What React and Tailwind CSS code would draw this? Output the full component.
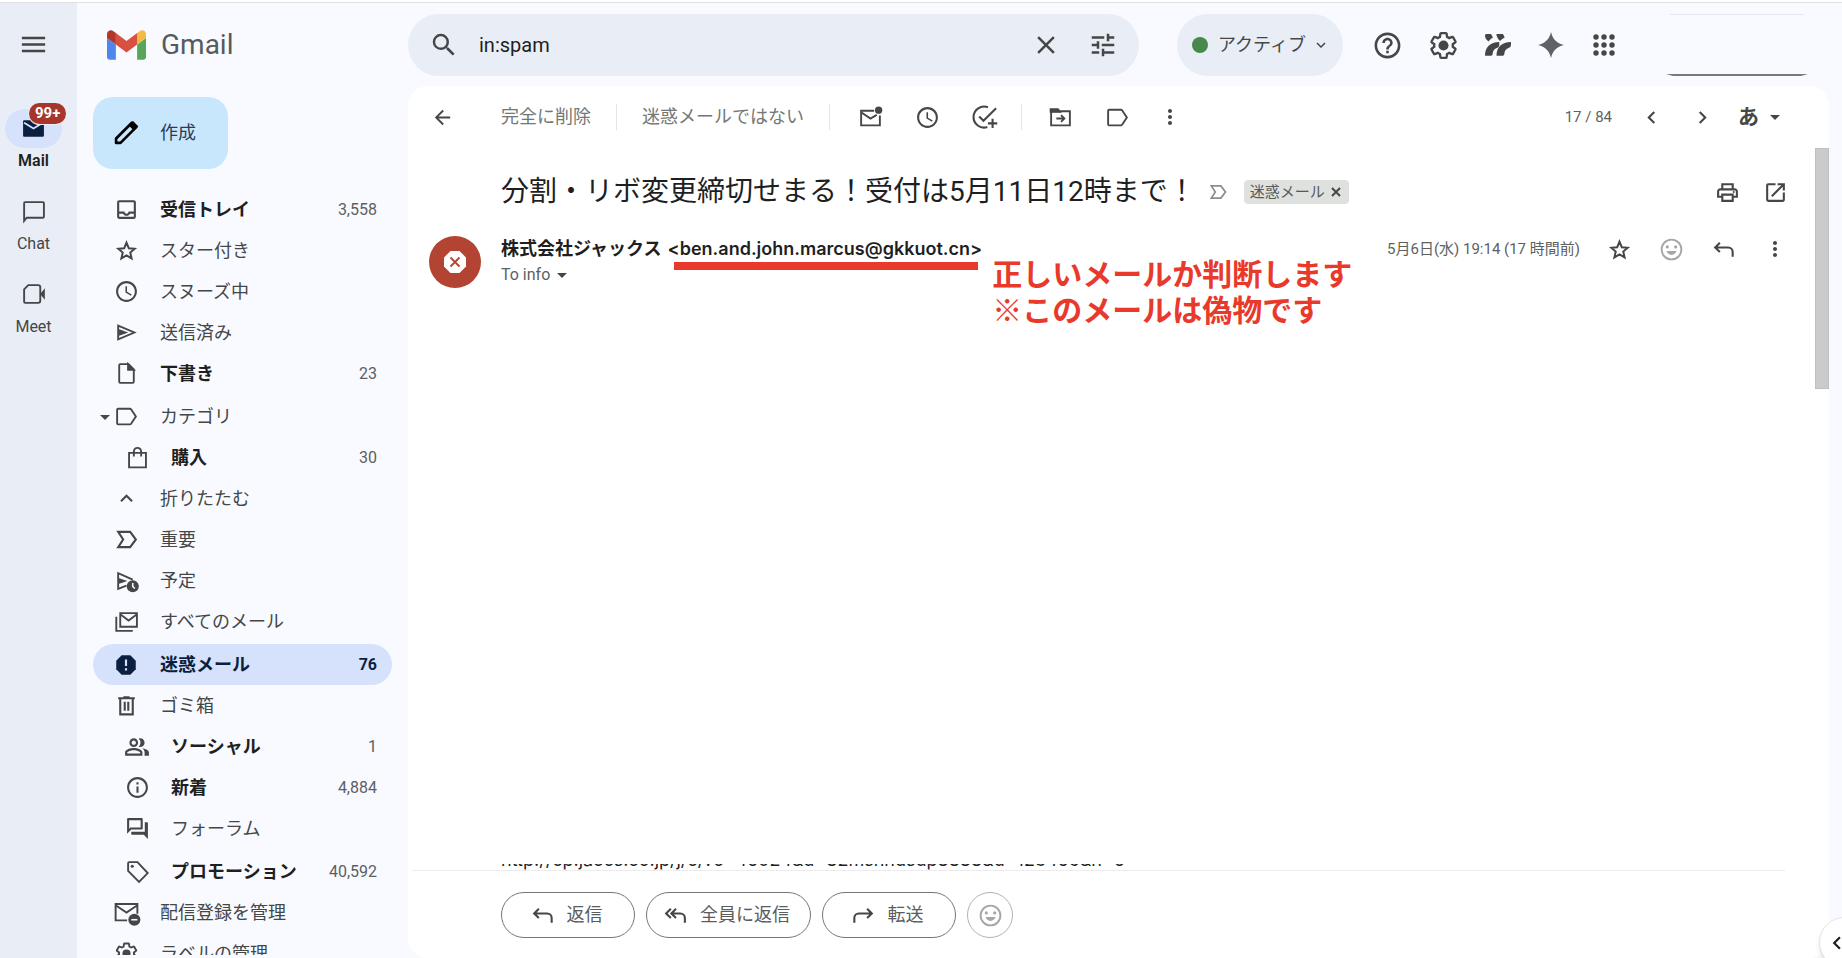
import React, { useState } from 'react';
import {
    MdMenu, MdSearch, MdClose, MdTune, MdHelpOutline, MdOutlineInbox, MdSchedule,
    MdInfoOutline, MdOutlineForum, MdOutlinePeopleAlt, MdMoreVert, MdArrowBack, MdChevronLeft,
    MdChevronRight, MdOutlinePrint, MdOpenInNew, MdArrowDropDown, MdExpandLess, MdExpandMore,
} from 'react-icons/md';

const Svg = ({ size = 25, children }) => (
    <svg width={size} height={size} viewBox="0 0 24 24" fill="none" stroke="currentColor" strokeWidth="1.8" aria-hidden="true">
        {children}
    </svg>
);

const StarIcon = () => (
    <Svg><path d="m12 4.500 2.200 5.300 5.700.5-4.300 3.700 1.300 5.600-4.900-3-4.900 3L8.400 14l-4.300-3.700 5.700-.5z" strokeWidth="1.900" /></Svg>
);
const SendIcon = () => (
    <Svg><path d="M4 5.500 19.500 12 4 18.500zM4 12h7M4 9.500l7 2.500-7 2.500" /></Svg>
);
const DraftIcon = () => (
    <Svg>
        <path d="M6 3h8l5 5v12a1 1 0 0 1-1 1H6a1 1 0 0 1-1-1V4a1 1 0 0 1 1-1z" />
        <path d="M13.500 3v5.500H19z" fill="currentColor" />
    </Svg>
);
const LabelIcon = () => (
    <Svg><path d="M4 4.500h11.200c.5 0 .9.2 1.200.6L21 12l-4.600 6.900c-.3.4-.7.6-1.200.6H4a1 1 0 0 1-1-1v-13a1 1 0 0 1 1-1z" /></Svg>
);
const BagIcon = () => (
    <Svg><path d="M3.900 7.500h16.200v14H3.900zM8.500 11V6.500a3.500 3.800 0 0 1 7 0V11" /></Svg>
);
const ImportantIcon = ({ size }) => (
    <Svg size={size}><path d="M4 4.700h11.500L21 12l-5.500 7.300H4L8.800 12z" strokeWidth="2" /></Svg>
);
const ScheduledIcon = () => (
    <Svg>
        <path d="M12 17 4 20V5l14 6.200M4 12.500h6M4 10.500l6 2-6 2" />
        <circle cx="18" cy="17.500" r="5.800" fill="currentColor" stroke="none" />
        <path d="M18 14.500v3.200l2 2" stroke="#f8faff" strokeWidth="1.500" />
    </Svg>
);
const AllMailIcon = () => (
    <Svg>
        <path d="M6 4h16v13H6zM6 5l8 6 8-6M2.200 7.500V21H18" />
    </Svg>
);
const SpamIcon = () => (
    <Svg size={26}>
        <path d="M8 3h8l5 5v8l-5 5H8l-5-5V8z" fill="currentColor" stroke="none" />
        <path d="M12 7v6M12 15v2" stroke="#d6e2fb" strokeWidth="2" />
    </Svg>
);
const TrashIcon = () => (
    <Svg><path d="M4 5h16M9 4h6M6 5v15.500h12V5M10.300 8.500v8.500M13.700 8.500v8.500" strokeWidth="2" /></Svg>
);
const PromoIcon = () => (
    <Svg>
        <path d="M3 4v7.500L13.500 22 21.800 13.500 12 3H4a1 1 0 0 0-1 1z" />
        <circle cx="7" cy="7" r="1.500" fill="currentColor" stroke="none" />
    </Svg>
);
const UnsubscribeIcon = () => (
    <Svg size={29}>
        <path d="M12.500 18.500H3V5h18v8M3 6l9 6 9-6" strokeWidth="1.600" />
        <circle cx="18.500" cy="18" r="5" fill="currentColor" stroke="none" />
        <path d="M16 18h5" stroke="#f8faff" strokeWidth="1.300" />
    </Svg>
);
const GearIcon = ({ size = 25 }) => (
    <Svg size={size}>
        <path d="M19.140 12.940c.04-.3.06-.61.06-.94 0-.32-.02-.64-.07-.94l2.030-1.580c.18-.14.23-.41.12-.61l-1.920-3.320c-.12-.22-.37-.29-.59-.22l-2.390.96c-.5-.38-1.030-.7-1.620-.94l-.36-2.540c-.04-.24-.24-.41-.48-.41h-3.840c-.24 0-.43.17-.47.41l-.36 2.540c-.59.24-1.130.57-1.620.94l-2.390-.96c-.22-.08-.47 0-.59.22L2.740 8.870c-.12.21-.08.47.12.61l2.030 1.580c-.05.3-.09.63-.09.94s.02.64.07.94l-2.030 1.580c-.18.14-.23.41-.12.61l1.920 3.320c.12.22.37.29.59.22l2.390-.96c.5.38 1.030.7 1.620.94l.36 2.540c.05.24.24.41.48.41h3.840c.24 0 .44-.17.47-.41l.36-2.540c.59-.24 1.130-.56 1.620-.94l2.390.96c.22.08.47 0 .59-.22l1.920-3.320c.12-.22.07-.47-.12-.61l-2.010-1.580z" />
        <circle cx="12" cy="12" r="3.900" fill="currentColor" stroke="none" />
    </Svg>
);
const UnreadIcon = () => (
    <Svg>
        <path d="M15.500 5.500H3v14h18V10M3 7l9 6 6-3.500" />
        <circle cx="19.800" cy="5" r="3.500" fill="currentColor" stroke="none" />
    </Svg>
);
const TaskIcon = () => (
    <Svg size={28}>
        <path d="M14.500 3.700A9 9 0 1 0 14 20.600M7 11.500l3.700 3.700L21.500 4.500M18.500 13.500v8M14.500 17.500h8" />
    </Svg>
);
const MoveIcon = () => (
    <Svg>
        <path d="M3 6h18v13.500H3zM8 13h7M12.500 9.800l3.200 3.200-3.200 3.200" />
        <path d="M2.500 4h7l2 2.500h-9z" fill="currentColor" />
    </Svg>
);
const ReplyIcon = ({ flip }) => (
    <svg width="25" height="25" viewBox="0 0 24 24" fill="none" stroke="currentColor" strokeWidth="2" aria-hidden="true" className={flip ? '-scale-x-100' : ''}>
        <path d="M8.500 5.500 4 10l4.500 4.500M4 10h12.500c2.300 0 4.300 1.800 4.300 4.300V19" />
    </svg>
);
const ReplyAllIcon = () => (
    <Svg><path d="M7.500 5.500 3 10l4.500 4.500M12.500 5.500 8 10l4.500 4.500M8 10h8.700c2.300 0 4.300 1.800 4.300 4.300V19" strokeWidth="2" /></Svg>
);
const SmileIcon = () => (
    <Svg>
        <circle cx="12" cy="12" r="9.500" />
        <circle cx="8" cy="9.500" r="1.500" fill="currentColor" stroke="none" />
        <circle cx="16" cy="9.500" r="1.500" fill="currentColor" stroke="none" />
        <path d="M7.200 13.500h9.600c-.7 2.300-2.500 3.700-4.800 3.700s-4.100-1.400-4.800-3.700z" fill="currentColor" stroke="none" />
    </Svg>
);

const GmailLogo = () => (
    <svg width="39" height="30" viewBox="52 42 88 66" aria-hidden="true">
        <path fill="#4f86ee" d="M58 108h14V74L52 59v43c0 3.320 2.690 6 6 6" />
        <path fill="#58a55c" d="M120 108h14c3.320 0 6-2.690 6-6V59l-20 15" />
        <path fill="#f2bb42" d="M120 48v26l20-15v-8c0-7.420-8.470-11.650-14.400-7.200" />
        <path fill="#d85140" d="M72 74V48l24 18 24-18v26L96 92" />
        <path fill="#b3362b" d="M52 51v8l20 15V48l-5.600-4.200c-5.940-4.450-14.400-.22-14.400 7.200" />
    </svg>
);

const folderGroups = [
    [
        { name: '受信トレイ', icon: <MdOutlineInbox size={25} />, count: '3,558', bold: true },
        { name: 'スター付き', icon: <StarIcon /> },
        { name: 'スヌーズ中', icon: <MdSchedule size={25} /> },
        { name: '送信済み', icon: <SendIcon /> },
        { name: '下書き', icon: <DraftIcon />, count: '23', bold: true },
    ],
    [
        { name: 'カテゴリ', icon: <LabelIcon />, caret: true },
        { name: '購入', icon: <BagIcon />, count: '30', bold: true, nested: true },
        { name: '折りたたむ', icon: <MdExpandLess size={25} /> },
        { name: '重要', icon: <ImportantIcon /> },
        { name: '予定', icon: <ScheduledIcon /> },
        { name: 'すべてのメール', icon: <AllMailIcon /> },
    ],
    [
        { name: '迷惑メール', icon: <SpamIcon />, count: '76', bold: true, active: true },
        { name: 'ゴミ箱', icon: <TrashIcon /> },
        { name: 'ソーシャル', icon: <MdOutlinePeopleAlt size={26} />, count: '1', bold: true, nested: true },
        { name: '新着', icon: <MdInfoOutline size={25} />, count: '4,884', bold: true, nested: true },
        { name: 'フォーラム', icon: <MdOutlineForum size={25} />, nested: true },
    ],
    [
        { name: 'プロモーション', icon: <PromoIcon />, count: '40,592', bold: true, nested: true },
        { name: '配信登録を管理', icon: <UnsubscribeIcon /> },
        { name: 'ラベルの管理', icon: <GearIcon /> },
    ],
];

const Folder = ({ folder }) => (
    <a
        href="#"
        className={`relative flex h-[41px] items-center rounded-full pr-[15px] ${folder.nested ? 'pl-7' : 'pl-[17px]'} ${folder.active ? 'bg-[#d6e2fb] text-[#0b1f41]' : ''}`}
    >
        {folder.caret && <MdArrowDropDown size={24} className="absolute left-0" />}
        <span className="flex w-8 shrink-0 justify-center">{folder.icon}</span>
        <span className={`ml-[18px] text-lg leading-6 ${folder.bold ? 'font-bold' : ''} ${folder.bold && !folder.active ? 'text-[#1f1f1f]' : ''}`}>
            {folder.name}
        </span>
        {folder.count && (
            <span className={`ml-auto text-base ${folder.active ? 'font-bold' : 'text-[#5e5f61]'}`}>{folder.count}</span>
        )}
    </a>
);

const RailItem = ({ label, active, badge, children }) => (
    <a href="#" className="flex h-[83px] w-full flex-col items-center">
        <span className={`relative mr-2.5 flex h-[39px] w-[57px] items-center justify-center rounded-full ${active ? 'bg-[#d6e2fb] text-[#0b1f41]' : ''}`}>
            {children}
            {badge && (
                <span className="absolute -top-[6px] left-[24px] rounded-full bg-[#a6352b] px-1.5 text-[15px] leading-[21px] font-bold text-white ring-1 ring-[#e9edf6]">
                    {badge}
                </span>
            )}
        </span>
        <span className={`mr-2.5 text-base leading-[26px] ${active ? 'font-semibold text-[#1f1f1f]' : ''}`}>{label}</span>
    </a>
);

const IconButton = ({ label, width = 'w-[57px]', children }) => (
    <button type="button" aria-label={label} className={`flex h-10 shrink-0 items-center justify-center ${width}`}>
        {children}
    </button>
);

const ReplyButton = ({ icon, width, children }) => (
    <button type="button" className={`flex h-[46px] items-center justify-center gap-3 rounded-full border border-[#747775] pr-1 text-lg text-[#5a5c5e] ${width}`}>
        <span className="text-[#444746]">{icon}</span>
        {children}
    </button>
);

const Header = () => {
    const [query, setQuery] = useState('in:spam');

    return (
        <header className="flex h-[83px] shrink-0 items-start pt-[11px]">
            <div className="flex h-[62px] w-[331px] shrink-0 items-center gap-[15px] pl-[30px]">
                <GmailLogo />
                <span className="text-[28px] text-[#575a5c]">Gmail</span>
            </div>
            <form className="flex h-[62px] min-w-0 flex-1 items-center rounded-full bg-[#e9edf6] pl-[21px]" onSubmit={(e) => e.preventDefault()}>
                <button type="submit" aria-label="検索"><MdSearch size={30} /></button>
                <input
                    aria-label="メールを検索"
                    className="ml-5 min-w-0 flex-1 bg-transparent text-xl text-[#1f1f1f] outline-none"
                    value={query}
                    onChange={(e) => setQuery(e.target.value)}
                />
                <button type="button" aria-label="検索をクリア" className="w-[57px]" onClick={() => setQuery('')}>
                    <MdClose size={30} className="mx-auto" />
                </button>
                <button type="button" aria-label="検索オプション" className="mr-2 w-[57px]"><MdTune size={30} className="mx-auto" /></button>
            </form>
            <button type="button" className="ml-[38px] flex h-[62px] w-[166px] shrink-0 items-center rounded-full bg-[#e9edf6] pl-[15px] text-lg">
                <span className="mr-2.5 size-4 rounded-full bg-[#47894a]"></span>
                アクティブ
                <MdExpandMore size={18} className="ml-1.5" />
            </button>
            <div className="ml-4 flex h-[62px] shrink-0 items-center">
                <IconButton label="ヘルプ" width="w-14"><MdHelpOutline size={31} /></IconButton>
                <IconButton label="設定" width="w-14"><GearIcon size={31} /></IconButton>
                <IconButton label="拡張機能" width="w-[53px]">
                    <svg width="26" height="22" viewBox="0 0 26 22" fill="currentColor" aria-hidden="true">
                        <path d="M0 1.500C0 .6.600 0 1.500 0H6l2 3.500C6.200 4.500 4.800 5.800 3.600 7.500 1.500 6 0 4 0 1.500zM11.300 0H17c.8 0 1.200.3 1.500 1l1.200 2.500c-1.800.9-3.300 2-4.600 3.500-2-1.500-3.300-4-3.800-7z" />
                        <path d="M0 21.700C0 13.500 5 8 14.300 8v2.500c0 2-.8 2.800-2.500 3.500-2.900 1.300-3.900 3-4.200 6-.1 1.100-.6 1.700-1.600 1.700zM11.500 21.700C11.500 13.500 16.500 8 26 8v2.500c0 2-.8 2.800-2.500 3.500-2.900 1.300-3.900 3-4.200 6-.1 1.100-.6 1.700-1.600 1.700z" />
                    </svg>
                </IconButton>
                <IconButton label="Gemini" width="w-[53px]">
                    <svg width="26" height="26" viewBox="0 0 26 26" fill="#5f6368" aria-hidden="true">
                        <path d="M13 0c2 7.500 5.500 11 13 13-7.500 2-11 5.500-13 13-2-7.500-5.500-11-13-13C7.500 11 11 7.500 13 0z" />
                    </svg>
                </IconButton>
                <IconButton label="アプリ" width="w-[53px]">
                    <svg width="22" height="22" viewBox="0 0 22 22" fill="currentColor" aria-hidden="true">
                        {[3, 11, 19].map((y) => [3, 11, 19].map((x) => <circle key={`${x}-${y}`} cx={x} cy={y} r="2.700" />))}
                    </svg>
                </IconButton>
            </div>
            <div className="mr-[34px] ml-9 flex h-[62px] w-[142px] shrink-0 flex-col justify-between">
                <div className="mx-1 h-px bg-[#e5e8ec]"></div>
                <svg width="142" height="2" viewBox="0 0 142 2" aria-hidden="true">
                    <path d="M0 0h142l-7 2H7z" fill="#77797b" />
                </svg>
            </div>
        </header>
    );
};

const Sidebar = () => (
    <aside className="flex w-[331px] shrink-0 flex-col overflow-hidden pr-4 pb-[3px] pl-4">
        <button type="button" className="mt-[11px] flex h-[72px] w-[135px] shrink-0 items-center rounded-[20px] bg-[#c8e7fc] pl-[19px] text-lg text-[#2b3a55]">
            <svg width="28" height="28" viewBox="0 0 24 24" fill="none" stroke="#000" strokeWidth="2.300" aria-hidden="true">
                <path d="M3.500 20.500v-3.800L17 3.200l3.800 3.800L7.300 20.500z" strokeLinejoin="round" />
                <path d="m15 5.500 3-3 3.800 3.800-3 3z" fill="#000" strokeWidth="1" />
            </svg>
            <span className="ml-5">作成</span>
        </button>
        <nav className="mt-5 flex min-h-0 flex-1 flex-col gap-0.5 overflow-hidden">
            {folderGroups.map((group, i) => (
                <div key={i} className="shrink-0">
                    {group.map((folder) => <Folder key={folder.name} folder={folder} />)}
                </div>
            ))}
        </nav>
    </aside>
);

const Toolbar = () => (
    <div className="flex h-[62px] shrink-0 items-center">
        <IconButton label="戻る" width="w-[68px]"><MdArrowBack size={23} /></IconButton>
        <button type="button" className="px-[25px] text-lg text-[#747775]">完全に削除</button>
        <span className="h-[26px] w-px bg-[#e3e5e8]"></span>
        <button type="button" className="px-[25px] text-lg text-[#747775]">迷惑メールではない</button>
        <span className="mr-3 h-[26px] w-px bg-[#e3e5e8]"></span>
        <IconButton label="未読にする"><UnreadIcon /></IconButton>
        <IconButton label="スヌーズ"><MdSchedule size={25} /></IconButton>
        <IconButton label="ToDoリストに追加"><TaskIcon /></IconButton>
        <span className="mr-2.5 ml-2 h-[26px] w-px bg-[#e3e5e8]"></span>
        <IconButton label="移動"><MoveIcon /></IconButton>
        <IconButton label="ラベル"><LabelIcon /></IconButton>
        <IconButton label="その他" width="w-12"><MdMoreVert size={24} /></IconButton>
        <span className="mr-3.5 ml-auto text-[15px] text-[#5e5f61]">17 / 84</span>
        <IconButton label="新しい" width="w-[51px]"><MdChevronLeft size={25} /></IconButton>
        <IconButton label="前" width="w-[51px]"><MdChevronRight size={25} /></IconButton>
        <button type="button" aria-label="入力ツール" className="mr-[42px] ml-2.5 flex items-center gap-1">
            <span className="text-[21px] leading-7 font-bold">あ</span>
            <MdArrowDropDown size={24} />
        </button>
    </div>
);

const Message = () => (
    <article className="flex min-h-0 flex-1 flex-col">
        <div className="mt-[26px] flex h-9 items-center pr-[30px] pl-[93px]">
            <h1 className="text-[28px] leading-9 text-[#1f1f1f]">分割・リボ変更締切せまる！受付は5月11日12時まで！</h1>
            <span className="ml-3 text-[#8a8c8e]"><ImportantIcon size={20} /></span>
            <span className="ml-4 flex h-6 items-center gap-1 rounded bg-[#dfe1de] px-1.5 text-[15px] text-[#56585a]">
                迷惑メール
                <button type="button" aria-label="ラベルを外す" className="text-[#444746]">
                    <svg width="14" height="14" viewBox="0 0 14 14" stroke="currentColor" strokeWidth="2" aria-hidden="true">
                        <path d="m3 3 8 8m0-8-8 8" />
                    </svg>
                </button>
            </span>
            <div className="ml-auto flex">
                <IconButton label="印刷" width="w-12"><MdOutlinePrint size={25} /></IconButton>
                <IconButton label="新しいウィンドウ" width="w-12"><MdOpenInNew size={25} /></IconButton>
            </div>
        </div>

        <div className="mt-[26px] flex h-[52px] items-start pr-7 pl-[21px]">
            <div className="flex size-[52px] shrink-0 items-center justify-center rounded-full bg-[#b34434]">
                <svg width="22" height="22" viewBox="0 0 22 22" aria-hidden="true">
                    <path d="M6.500 0h9L22 6.500v9L15.500 22h-9L0 15.500v-9z" fill="#fff" />
                    <path d="m6.500 6.500 9 9m0-9-9 9" stroke="#b34434" strokeWidth="1.800" />
                </svg>
            </div>
            <div className="ml-5">
                <div className="flex items-center text-lg leading-[26px] font-bold text-[#1f1f1f]">
                    <span>株式会社ジャックス</span>
                    <span className="relative ml-1.5">
                        <span className="font-['Inter','Noto_Sans_CJK_JP',sans-serif] font-semibold">&lt;ben.and.john.marcus@gkkuot.cn&gt;</span>
                        <span className="absolute top-[26px] right-1 left-1.5 h-2 bg-[#e9392b]"></span>
                        <span className="absolute top-[21px] left-full ml-2.5 text-[30px] leading-9 whitespace-nowrap text-[#e9392b]">
                            正しいメールか判断します<br />※このメールは偽物です
                        </span>
                    </span>
                </div>
                <button type="button" className="flex items-center text-base leading-[26px] text-[#5e5f61]">
                    To info <MdArrowDropDown size={24} className="text-[#444746]" />
                </button>
            </div>
            <div className="ml-auto flex h-[26px] items-center">
                <span className="mr-[13px] text-[15px] text-[#5e5f61]">5月6日(水) 19:14 (17 時間前)</span>
                <IconButton label="スター" width="w-[52px]"><StarIcon /></IconButton>
                <span className="text-[#a5a7a6]"><IconButton label="リアクション" width="w-[52px]"><SmileIcon /></IconButton></span>
                <IconButton label="返信" width="w-[52px]"><ReplyIcon /></IconButton>
                <IconButton label="その他" width="w-[52px]"><MdMoreVert size={24} /></IconButton>
            </div>
        </div>

        <div className="mt-auto flex h-1.5 items-end overflow-hidden pl-[93px] font-['Inter',sans-serif] text-lg leading-5 text-[#1f1f1f]">
            <a href="#">http://cp.jaccs.co.jp/j/c/?c=45024&amp;d=82mshhdsdp8888&amp;d=123456&amp;h=5</a>
        </div>
    </article>
);

export default function App() {
    return (
        <div className="flex h-screen flex-col overflow-hidden bg-[#f8faff] font-['Roboto','Noto_Sans_CJK_JP',sans-serif] text-[#444746]">
            <div className="h-[3px] shrink-0 border-b border-[#e0e1e4] bg-white"></div>
            <div className="flex min-h-0 flex-1">
                <div className="flex w-[77px] shrink-0 flex-col items-center bg-[#e9edf6] pt-[26px]">
                    <button type="button" aria-label="メインメニュー" className="mr-2.5 mb-[49px]"><MdMenu size={31} /></button>
                    <RailItem label="Mail" badge="99+" active>
                        <Svg>
                            <path d="M3 4h18a1 1 0 0 1 1 1v14a1 1 0 0 1-1 1H3a1 1 0 0 1-1-1V5a1 1 0 0 1 1-1z" fill="currentColor" stroke="none" />
                            <path d="m3 6.500 9 5.500 9-5.500" stroke="#d6e2fb" />
                        </Svg>
                    </RailItem>
                    <RailItem label="Chat">
                        <Svg><path d="M3 21V4a1 1 0 0 1 1-1h17a1 1 0 0 1 1 1v13a1 1 0 0 1-1 1H5.500z" /></Svg>
                    </RailItem>
                    <RailItem label="Meet">
                        <Svg>
                            <path d="M7 3h9.500a2 2 0 0 1 2 2v13a2 2 0 0 1-2 2H4a1 1 0 0 1-1-1V7z" />
                            <path d="m19.500 11.500 2.500-3v6z" fill="currentColor" />
                        </Svg>
                    </RailItem>
                </div>

                <div className="flex min-w-0 flex-1 flex-col">
                    <Header />
                    <div className="flex min-h-0 flex-1">
                        <Sidebar />
                        <main className="relative mr-[13px] flex min-w-0 flex-1 flex-col rounded-[20px] bg-white">
                            <Toolbar />
                            <Message />
                            <div className="mr-11 ml-1 h-px bg-[#ececee]"></div>
                            <footer className="flex h-[87px] shrink-0 items-start gap-[11px] pt-[21px] pl-[93px]">
                                <ReplyButton icon={<ReplyIcon />} width="w-[134px]">返信</ReplyButton>
                                <ReplyButton icon={<ReplyAllIcon />} width="w-[165px]">全員に返信</ReplyButton>
                                <ReplyButton icon={<ReplyIcon flip />} width="w-[134px]">転送</ReplyButton>
                                <button type="button" aria-label="リアクションを追加" className="flex size-[46px] items-center justify-center rounded-full border border-[#b0b2b1] text-[#a5a7a6]">
                                    <SmileIcon />
                                </button>
                            </footer>
                            <div className="absolute top-[62px] right-0 h-[241px] w-3.5 border border-[#bfbfbf] bg-[#cbcbcb]"></div>
                        </main>
                    </div>
                </div>
            </div>
            <button type="button" aria-label="サイドパネルを表示" className="fixed -right-7 -bottom-2.5 flex size-[51px] items-center rounded-full border border-[#e1e3e8] bg-white pl-1 text-[#1f1f1f] shadow-md">
                <MdChevronLeft size={26} />
            </button>
        </div>
    );
}
